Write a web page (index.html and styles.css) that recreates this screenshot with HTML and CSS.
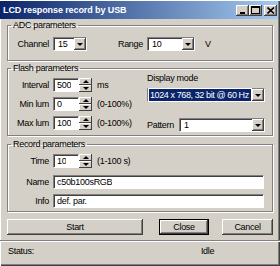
FILE: index.html
```html
<!DOCTYPE html>
<html lang="en">
<head>
    <meta charset="UTF-8">
    <title>LCD response record by USB</title>
    <link rel="stylesheet" href="styles.css">
</head>
<body>
    <div class="window">
        <div class="titlebar">
            <span class="title">LCD response record by USB</span>
            <div class="caption-btns">
                <span class="cbtn"><svg width="8" height="7" viewBox="0 0 8 7"><rect x="1" y="5" width="5" height="2" fill="#000"/></svg></span>
                <span class="cbtn"><svg width="9" height="8" viewBox="0 0 9 8"><rect x="0.5" y="0.5" width="8" height="7" fill="none" stroke="#000"/><rect x="0" y="0" width="9" height="2" fill="#000"/></svg></span>
                <span class="cbtn close"><svg width="8" height="7" viewBox="0 0 8 7"><path d="M0.5 0.5 L7 6.5 M7 0.5 L0.5 6.5" stroke="#000" stroke-width="1.6"/></svg></span>
            </div>
        </div>

        <div class="main">
            <fieldset class="group adc">
                <legend>ADC parameters</legend>
                <div class="row adc-row">
                    <span class="lbl">Channel</span>
                    <div class="combo channel"><span class="val">15</span><span class="drop"><i class="tri down"></i></span></div>
                    <span class="lbl range-lbl">Range</span>
                    <div class="combo range"><span class="val">10</span><span class="drop"><i class="tri down"></i></span></div>
                    <span class="unit v">V</span>
                </div>
            </fieldset>

            <fieldset class="group flash">
                <legend>Flash parameters</legend>
                <div class="flash-cols">
                    <div class="col-left">
                        <div class="row">
                            <span class="lbl">Interval</span>
                            <div class="field num"><span>500</span></div>
                            <div class="spin"><span class="sbtn"><i class="tri up"></i></span><span class="sbtn"><i class="tri down"></i></span></div>
                            <span class="unit">ms</span>
                        </div>
                        <div class="row">
                            <span class="lbl">Min lum</span>
                            <div class="field num"><span>0</span></div>
                            <div class="spin"><span class="sbtn"><i class="tri up"></i></span><span class="sbtn"><i class="tri down"></i></span></div>
                            <span class="unit">(0-100%)</span>
                        </div>
                        <div class="row">
                            <span class="lbl">Max lum</span>
                            <div class="field num"><span>100</span></div>
                            <div class="spin"><span class="sbtn"><i class="tri up"></i></span><span class="sbtn"><i class="tri down"></i></span></div>
                            <span class="unit">(0-100%)</span>
                        </div>
                    </div>
                    <div class="col-right">
                        <div class="mode-lbl">Display mode</div>
                        <div class="combo mode"><span class="val selected">1024 x 768, 32 bit @ 60 Hz</span><span class="drop"><i class="tri down"></i></span></div>
                        <div class="row pattern-row">
                            <span class="pattern-lbl">Pattern</span>
                            <div class="combo pattern"><span class="val">1</span><span class="drop"><i class="tri down"></i></span></div>
                        </div>
                    </div>
                </div>
            </fieldset>

            <fieldset class="group record">
                <legend>Record parameters</legend>
                <div class="row">
                    <span class="lbl">Time</span>
                    <div class="field num"><span>10</span></div>
                    <div class="spin"><span class="sbtn"><i class="tri up"></i></span><span class="sbtn"><i class="tri down"></i></span></div>
                    <span class="unit">(1-100 s)</span>
                </div>
                <div class="row name-row">
                    <span class="lbl">Name</span>
                    <div class="field wide"><span>c50b100sRGB</span></div>
                </div>
                <div class="row info-row">
                    <span class="lbl">Info</span>
                    <div class="field wide"><span>def. par.</span></div>
                </div>
            </fieldset>

            <div class="buttons">
                <button class="btn start">Start</button>
                <button class="btn close-btn default">Close</button>
                <button class="btn cancel">Cancel</button>
            </div>
        </div>

        <div class="statusbar">
            <span class="status-lbl">Status:</span>
            <span class="status-val">Idle</span>
        </div>
    </div>
</body>
</html>
```

FILE: styles.css
```css
* {
    box-sizing: border-box;
}

body {
    margin: 0;
    font-family: 'Liberation Sans', Arial, sans-serif;
    font-size: 9px;
    letter-spacing: -0.3px;
    color: #000;
    background-color: #d4d0c8;
}

.window {
    width: 280px;
    height: 266px;
    background-color: #d4d0c8;
    box-shadow: inset 1px 1px #ffffff, inset -1px -1px #404040, inset -2px -2px #808080;
    display: flex;
    flex-direction: column;
}

.titlebar {
    height: 18px;
    margin: 1px 2px 0 0;
    background: linear-gradient(to right, #0a246a, #a6caf0);
    display: flex;
    align-items: center;
    justify-content: space-between;
    padding-left: 3px;
}

.title {
    color: #fff;
    font-weight: bold;
    font-size: 9px;
    letter-spacing: -0.1px;
}

.caption-btns {
    display: flex;
    padding-right: 1px;
}

.cbtn {
    width: 13px;
    height: 11px;
    background-color: #d4d0c8;
    box-shadow: inset -1px -1px #404040, inset 1px 1px #ffffff, inset -2px -2px #808080;
    display: flex;
    align-items: center;
    justify-content: center;
}

.cbtn.close {
    margin-left: 2px;
}

.main {
    padding: 1px 7px 0 7px;
}

.group {
    margin: 0;
    padding: 0;
    border: 1px solid #808080;
    box-shadow: inset 1px 1px #ffffff, 1px 1px #ffffff;
    width: 266px;
}

.group legend {
    padding: 0 2px;
    margin-left: 3px;
    line-height: 10px;
    height: 10px;
}

.row {
    display: flex;
    align-items: center;
    height: 14px;
}

.lbl {
    width: 41px;
    text-align: right;
    margin-right: 4px;
}

.unit {
    margin-left: 5px;
}

/* ADC */
.adc {
    padding-bottom: 9px;
}

.adc-row {
    margin-top: 7px;
}

.range-lbl {
    width: 40px;
    margin-left: 16px;
}

.unit.v {
    margin-left: 10px;
}

/* inputs */
.field, .combo {
    height: 14px;
    background-color: #fff;
    border: 1px solid;
    border-color: #808080 #ffffff #ffffff #808080;
    box-shadow: inset 1px 1px #404040;
    display: flex;
    align-items: center;
}

.field span, .combo .val {
    padding-left: 3px;
    line-height: 12px;
    white-space: nowrap;
    overflow: hidden;
}

.field.num {
    width: 26px;
}

.field.wide {
    width: 211px;
}

.combo {
    justify-content: space-between;
    padding: 1px 0 1px 1px;
}

.combo .val {
    flex: 1;
}

.combo.channel {
    width: 34px;
}

.combo.range {
    width: 48px;
}

.drop {
    width: 12px;
    height: 12px;
    flex: none;
    background-color: #d4d0c8;
    box-shadow: inset -1px -1px #404040, inset 1px 1px #ffffff, inset -2px -2px #808080;
    display: flex;
    align-items: center;
    justify-content: center;
}

.tri {
    display: block;
    width: 0;
    height: 0;
    border-left: 3px solid transparent;
    border-right: 3px solid transparent;
}

.tri.down {
    border-top: 3px solid #000;
}

.tri.up {
    border-bottom: 3px solid #000;
}

.spin {
    width: 13px;
    height: 14px;
    display: flex;
    flex-direction: column;
}

.sbtn {
    height: 7px;
    background-color: #d4d0c8;
    box-shadow: inset -1px -1px #404040, inset 1px 1px #ffffff;
    display: flex;
    align-items: center;
    justify-content: center;
}

/* flash */
.flash {
    margin-top: 2px;
    padding-bottom: 3px;
}

.flash-cols {
    display: flex;
}

.col-left {
    display: flex;
    flex-direction: column;
    gap: 5px;
    padding-top: 5px;
    width: 139px;
}

.mode-lbl {
    line-height: 10px;
}

.combo.mode {
    width: 118px;
    margin-top: 5px;
}

.val.selected {
    background-color: #0a246a;
    color: #fff;
    margin-right: 1px;
    outline: 1px solid #fff;
    padding-left: 1px;
    letter-spacing: -0.4px;
}

.pattern-row {
    margin-top: 16px;
}

.pattern-lbl {
    width: 32px;
}

.combo.pattern {
    width: 86px;
}

/* record */
.record {
    margin-top: 3px;
    padding-bottom: 3px;
}

.record .row:first-of-type {
    margin-top: 5px;
}

.name-row {
    margin-top: 7px;
}

.info-row {
    margin-top: 5px;
}

/* buttons */
.buttons {
    display: flex;
    margin-top: 7px;
}

.btn {
    height: 16px;
    font-family: inherit;
    font-size: 9px;
    letter-spacing: -0.3px;
    padding: 0;
    border: 0;
    background-color: #d4d0c8;
    box-shadow: inset -1px -1px #404040, inset 1px 1px #ffffff, inset -2px -2px #808080;
}

.btn.start {
    width: 136px;
}

.btn.close-btn {
    width: 50px;
    margin-left: 16px;
}

.btn.default {
    border: 1px solid #000;
}

.btn.cancel {
    width: 51px;
    margin-left: 13px;
}

/* status */
.statusbar {
    margin-top: 5px;
    border-top: 1px solid #808080;
    box-shadow: inset 0 1px #ffffff;
    display: flex;
    align-items: center;
    height: 22px;
    padding-bottom: 2px;
}

.status-lbl {
    margin-left: 8px;
}

.status-val {
    margin-left: 167px;
}
```
